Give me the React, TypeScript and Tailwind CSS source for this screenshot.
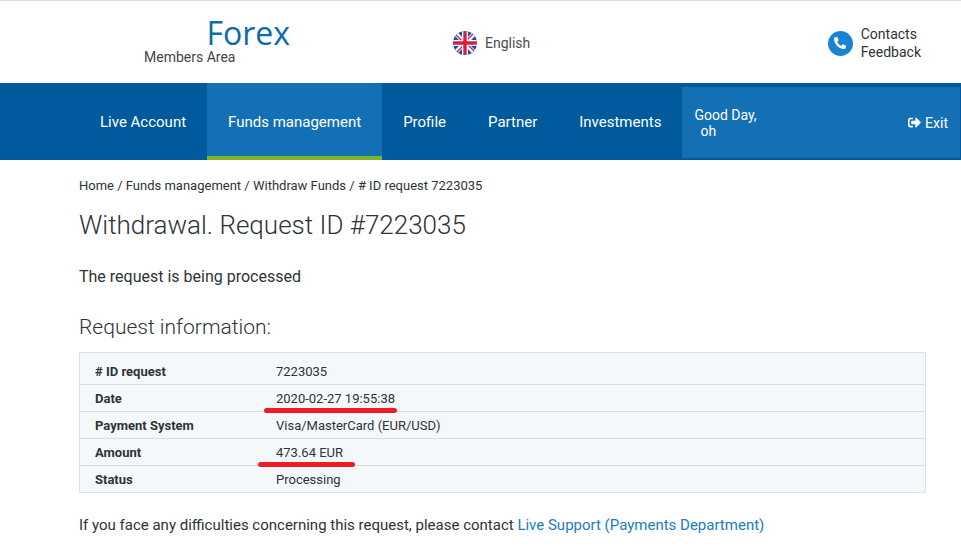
import { FaPhoneAlt, FaSignOutAlt } from 'react-icons/fa';

const NAV_ITEMS = [
  { href: '#account', label: 'Live Account' },
  { href: '#funds', label: 'Funds management', active: true },
  { href: '#profile', label: 'Profile' },
  { href: '#partner', label: 'Partner' },
  { href: '#investments', label: 'Investments' },
];

const CRUMBS = [
  { href: '#home', label: 'Home' },
  { href: '#funds', label: 'Funds management' },
  { href: '#withdraw', label: 'Withdraw Funds' },
];

const ROWS = [
  { label: '# ID request', value: '7223035' },
  { label: 'Date', value: '2020-02-27 19:55:38', mark: '-left-3 -right-0.5 -bottom-0.5' },
  { label: 'Payment System', value: 'Visa/MasterCard (EUR/USD)' },
  { label: 'Amount', value: '473.64 EUR', mark: '-left-[18px] -right-3 -bottom-0.5' },
  { label: 'Status', value: 'Processing' },
];

const FlagIcon = () => (
  <svg viewBox="0 0 24 24" className="w-6 h-6" aria-hidden="true">
    <clipPath id="flag"><circle cx="12" cy="12" r="12"/></clipPath>
    <g clipPath="url(#flag)">
      <rect width="24" height="24" fill="#0b57b0"/>
      <path d="M2 2l20 20M22 2L2 22" stroke="#fff" strokeWidth="4.5"/>
      <path d="M2 3l9 9M22 21l-9-9M21 2l-9 9M3 22l9-9" stroke="#dc1d3f" strokeWidth="1.4"/>
      <path d="M12 0v24M0 12h24" stroke="#fff" strokeWidth="6"/>
      <path d="M12 0v24M0 12h24" stroke="#dc1d3f" strokeWidth="3.4"/>
    </g>
  </svg>
);

export default function App() {
  return (
    <div className="min-h-screen bg-white text-[#2d3338] font-['Roboto',sans-serif] border-t border-[#dcdcdc]">

      {/* TOP BAR */}
      <header className="flex h-[82px] items-center pt-0.5 pl-36 pr-10">
        <div className="flex w-[146px] flex-col pb-1">
          <a href="#home" className="self-end font-['Open_Sans',sans-serif] text-[32px] leading-8 text-[#0a6cab]">Forex</a>
          <span className="text-sm leading-4 text-[#444]">Members Area</span>
        </div>

        <button type="button" className="ml-[163px] flex items-center gap-2 text-sm text-[#474d54]">
          <FlagIcon />
          English
        </button>

        <div className="ml-auto flex items-center gap-2">
          <span className="flex h-[25px] w-[25px] items-center justify-center rounded-full bg-[#1a84d4] text-white">
            <FaPhoneAlt className="h-3 w-3" />
          </span>
          <div className="flex flex-col text-sm leading-[18px]">
            <a href="#contacts">Contacts</a>
            <a href="#feedback">Feedback</a>
          </div>
        </div>
      </header>

      {/* MAIN NAV */}
      <div className="flex h-[77px] bg-[#005a9c] pl-[79px] pr-px text-white">
        <nav className="flex">
          {NAV_ITEMS.map(item => (
            <a key={item.label} href={item.href}
              className={`flex items-center border-b-4 pt-1.5 px-[21px] text-[15px] whitespace-nowrap
                ${item.active ? 'bg-[#1470b5] border-b-[#7db62a]' : 'border-b-transparent'}`}>
              {item.label}
            </a>
          ))}
        </nav>

        <div className="mt-1 mb-0.5 flex flex-1 items-center justify-between bg-[#1470b5] px-3 text-sm leading-4">
          <div>
            <div>Good Day,</div>
            <div className="pl-1.5">oh</div>
          </div>
          <a href="#exit" className="flex items-center gap-1">
            <FaSignOutAlt className="h-[13px] w-[13px]" />
            Exit
          </a>
        </div>
      </div>

      {/* CONTENT */}
      <main className="pl-[79px] pr-[35px]">
        <nav className="pt-4 text-[13px] leading-5">
          {CRUMBS.map(c => (
            <span key={c.label}><a href={c.href}>{c.label}</a> / </span>
          ))}
          <span># ID request 7223035</span>
        </nav>

        <h1 className="mt-[13px] text-[26px] leading-8 font-light">Withdrawal. Request ID #7223035</h1>
        <p className="mt-6 text-base leading-6">The request is being processed</p>
        <h2 className="mt-6 text-[21px] leading-7 font-light">Request information:</h2>

        <div className="mt-[11px] border border-[#d9e2e5] bg-[#f4f8fb] pt-[5px]">
          <table className="w-full text-left text-[13px]">
            <tbody>
              {ROWS.map(row => (
                <tr key={row.label} className="border-b border-[#dadcde] leading-6 last:border-b-0">
                  <th scope="row" className="w-[181px] pt-0.5 pl-[15px] font-bold">{row.label}</th>
                  <td className="pt-0.5 pl-[15px]">
                    <span className="relative block w-fit">
                      {row.value}
                      {row.mark && <span className={`absolute h-[5px] rounded-full bg-[#ee1c25] ${row.mark}`} />}
                    </span>
                  </td>
                </tr>
              ))}
            </tbody>
          </table>
        </div>

        <p className="mt-5 text-[15px] leading-6">
          If you face any difficulties concerning this request, please contact{' '}
          <a href="#support" className="text-[#1a7cc4]">Live Support (Payments Department)</a>
        </p>
      </main>

    </div>
  );
}
